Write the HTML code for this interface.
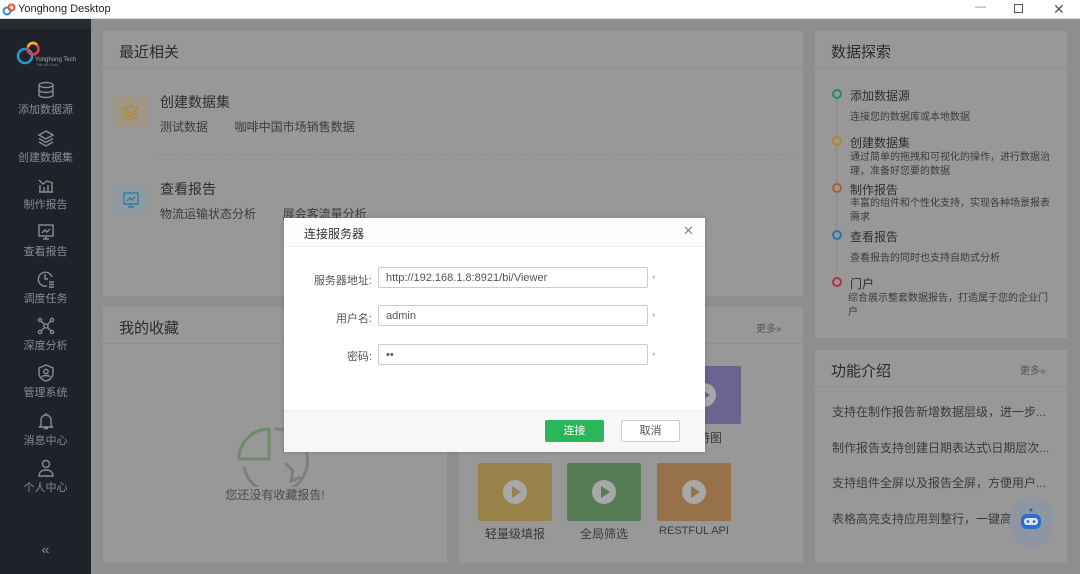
<!DOCTYPE html>
<html><head><meta charset="utf-8"><style>
*{margin:0;padding:0;box-sizing:border-box}
body{width:1080px;height:574px;overflow:hidden;font-family:"Liberation Sans","Noto Sans CJK SC",sans-serif;background:#8e8e8e;position:relative;color:#333}
.abs{position:absolute}
.title{left:0;top:0;width:1080px;height:19px;background:#fff;border-bottom:1px solid #ddd;font-size:11px;color:#222}
.side{left:0;top:19px;width:91px;height:555px;background:#1f2229}
.si{position:absolute;left:0;width:91px;text-align:center;color:#8a8c90;font-size:11px}
.si svg{display:block;margin:0 auto 2px}
.panel{background:#989898}
.ph{height:37px;border-bottom:1px solid #8f8f8f;font-size:15px;color:#2b2b2b;padding:10px 16px}
.t{color:#2e2e2e}
.g{color:#3b3b3b}
.tile{position:absolute;width:74px;height:58px;border-radius:2px}
.tile i{position:absolute;left:25px;top:17px;width:24px;height:24px;border-radius:50%;background:#a8a8a8}
.tile i:after{content:"";position:absolute;left:9px;top:6px;border-left:9px solid currentColor;border-top:6px solid transparent;border-bottom:6px solid transparent}
.lbl{position:absolute;width:90px;margin-left:-8px;text-align:center;font-size:12px;color:#3a3a3a;white-space:nowrap}
.dot{position:absolute;left:17px;width:10px;height:10px;border-radius:50%;border:2px solid}
.inp{position:absolute;left:94px;width:270px;height:21px;border:1px solid #ccc;border-radius:2px;background:#fff;font-size:11px;color:#555;padding:4px 7px}
.lab{position:absolute;right:333px;font-size:11px;color:#555;text-align:right}
.star{position:absolute;left:368px;color:#f08080;font-size:9px}
</style></head><body>
<div class="abs title">
<svg class="abs" style="left:2px;top:3px" width="14" height="13" viewBox="0 0 14 13"><circle cx="5" cy="8" r="3.5" fill="none" stroke="#2a8fd8" stroke-width="2"/><circle cx="9.5" cy="4.5" r="3" fill="none" stroke="#e84a3a" stroke-width="2"/><circle cx="9" cy="3" r="1.2" fill="#f0c020"/></svg>
<span class="abs" style="left:18px;top:3px">Yonghong Desktop</span>
<span class="abs" style="left:975px;top:1px;color:#888">—</span>
<span class="abs" style="left:1014px;top:4px;width:9px;height:9px;border:1px solid #555"></span>
<span class="abs" style="left:1053px;top:1px;color:#555;font-size:14px">✕</span>
</div>
<div class="abs side">
<div class="abs" style="left:0;top:0;width:91px;height:10px;background:#262a32"></div>
<svg class="abs" style="left:14px;top:20px" width="66" height="30" viewBox="0 0 66 30"><circle cx="11" cy="17" r="7" fill="none" stroke="#1c9fd0" stroke-width="2.5"/><circle cx="19" cy="10" r="5.5" fill="none" stroke="#e0404a" stroke-width="2.5"/><path d="M14 8 a5 5 0 0 1 9 -2" stroke="#f0b020" stroke-width="2.5" fill="none"/><text x="21" y="22" font-size="6" fill="#aaa" font-family="Liberation Sans">Yonghong Tech</text><text x="22" y="27" font-size="3.5" fill="#777" font-family="Liberation Sans">Talk with Data</text></svg>
<div class="si" style="top:62px"><svg width="18" height="18" viewBox="0 0 18 18" fill="none" stroke="#8a8c90" stroke-width="1.4"><ellipse cx="9" cy="4" rx="7" ry="2.5"/><path d="M2 4v10c0 1.4 3 2.5 7 2.5s7-1.1 7-2.5V4M2 9c0 1.4 3 2.5 7 2.5s7-1.1 7-2.5"/></svg>添加数据源</div>
<div class="si" style="top:110px"><svg width="18" height="18" viewBox="0 0 18 18" fill="none" stroke="#8a8c90" stroke-width="1.4"><path d="M9 2l7 4-7 4-7-4zM2 9.5l7 4 7-4M2 13l7 4 7-4"/></svg>创建数据集</div>
<div class="si" style="top:157px"><svg width="18" height="18" viewBox="0 0 18 18" fill="none" stroke="#8a8c90" stroke-width="1.4"><path d="M2 16h14M3 9v7M7 11v5M11 9v7M15 7v9M2 4l4 4 4-3 6 2"/></svg>制作报告</div>
<div class="si" style="top:204px"><svg width="18" height="18" viewBox="0 0 18 18" fill="none" stroke="#8a8c90" stroke-width="1.4"><rect x="2" y="2" width="14" height="11"/><path d="M5 10l3-3 2 2 3-3M6 16h6M9 13v3"/></svg>查看报告</div>
<div class="si" style="top:251px"><svg width="18" height="18" viewBox="0 0 18 18" fill="none" stroke="#8a8c90" stroke-width="1.4"><path d="M15 7a7 7 0 1 0-5 9"/><path d="M8 4v5h3M12 12h5M12 14.5h5M12 17h5"/></svg>调度任务</div>
<div class="si" style="top:298px"><svg width="18" height="18" viewBox="0 0 18 18" fill="none" stroke="#8a8c90" stroke-width="1.3"><circle cx="9" cy="9" r="2"/><circle cx="3" cy="3" r="1.6"/><circle cx="15" cy="3" r="1.6"/><circle cx="3" cy="15" r="1.6"/><circle cx="15" cy="15" r="1.6"/><path d="M4 4l3.5 3.5M14 4l-3.5 3.5M4 14l3.5-3.5M14 14l-3.5-3.5"/></svg>深度分析</div>
<div class="si" style="top:345px"><svg width="18" height="18" viewBox="0 0 18 18" fill="none" stroke="#8a8c90" stroke-width="1.4"><path d="M9 1l7 3v5c0 4-3 7-7 8-4-1-7-4-7-8V4z"/><circle cx="9" cy="7.5" r="2.2"/><path d="M5 13c1-2 7-2 8 0"/></svg>管理系统</div>
<div class="si" style="top:393px"><svg width="18" height="18" viewBox="0 0 18 18" fill="none" stroke="#8a8c90" stroke-width="1.4"><path d="M4 13V8a5 5 0 0 1 10 0v5l1.5 2h-13zM7 16.5h4M9 1v2"/></svg>消息中心</div>
<div class="si" style="top:440px"><svg width="18" height="18" viewBox="0 0 18 18" fill="none" stroke="#8a8c90" stroke-width="1.4"><circle cx="9" cy="5" r="3.5"/><path d="M2 17c0-4 3-6 7-6s7 2 7 6z"/></svg>个人中心</div>
<div class="si" style="top:522px;font-size:14px">«</div>
</div>

<div class="abs panel" style="left:103px;top:31px;width:700px;height:265px">
<div class="ph">最近相关</div>
<div class="abs" style="left:11px;top:64px;width:34px;height:34px;border-radius:4px;background:#9f9685"><svg style="margin:8px" width="18" height="18" viewBox="0 0 18 18" fill="none" stroke="#b08a30" stroke-width="1.4"><path d="M9 2l7 4-7 4-7-4zM2 9.5l7 4 7-4M2 13l7 4 7-4"/></svg></div>
<div class="abs t" style="left:57px;top:61px;font-size:14px">创建数据集</div>
<div class="abs g" style="left:57px;top:87px;font-size:12px">测试数据&nbsp;&nbsp;&nbsp;&nbsp;&nbsp;&nbsp;&nbsp;&nbsp;咖啡中国市场销售数据</div>
<div class="abs" style="left:51px;top:123px;width:640px;border-top:1px dashed #8c8c8c"></div>
<div class="abs" style="left:11px;top:152px;width:34px;height:34px;border-radius:4px;background:#8f9aa0"><svg style="margin:8px" width="18" height="18" viewBox="0 0 18 18" fill="none" stroke="#2a7ea8" stroke-width="1.4"><rect x="2" y="2" width="14" height="11"/><path d="M5 10l3-3 2 2 3-3M6 16h6M9 13v3"/></svg></div>
<div class="abs t" style="left:57px;top:148px;font-size:14px">查看报告</div>
<div class="abs g" style="left:57px;top:174px;font-size:12px">物流运输状态分析&nbsp;&nbsp;&nbsp;&nbsp;&nbsp;&nbsp;&nbsp;&nbsp;展会客流量分析</div>
</div>

<div class="abs panel" style="left:103px;top:307px;width:344px;height:256px">
<div class="ph">我的收藏</div>
<svg class="abs" style="left:130px;top:100px" width="95" height="80" viewBox="0 0 95 80"><path d="M6 52a30 30 0 0 1 30-30v30z" fill="none" stroke="#6f8b6c" stroke-width="3"/><path d="M41 22a32 32 0 1 1-30 38" fill="none" stroke="#7e7e7e" stroke-width="3"/><path d="M52 56l8 8-2 10 10-4" stroke="#7e7e7e" stroke-width="3" fill="none"/><text x="50" y="66" font-size="7" fill="#6f8b6c">+ +</text></svg>
<div class="abs" style="left:0;top:179px;width:344px;text-align:center;font-size:12px;color:#4a4a4a">您还没有收藏报告!</div>
</div>

<div class="abs panel" style="left:459px;top:307px;width:344px;height:256px">
<div class="ph" style="height:37px"></div>
<div class="abs" style="left:297px;top:13px;font-size:10px;color:#555">更多»</div>
<div class="tile" style="left:208px;top:59px;background:#6b6390;color:#6b6390"><i></i></div><div class="lbl" style="left:208px;top:122px">甘特图</div>
<div class="tile" style="left:19px;top:156px;background:#98824a;color:#98824a"><i></i></div><div class="lbl" style="left:19px;top:218px">轻量级填报</div>
<div class="tile" style="left:108px;top:156px;background:#567d53;color:#567d53"><i></i></div><div class="lbl" style="left:108px;top:218px">全局筛选</div>
<div class="tile" style="left:198px;top:156px;background:#967149;color:#967149"><i></i></div><div class="lbl" style="left:198px;top:218px;font-size:11px">RESTFUL API</div>
</div>

<div class="abs panel" style="left:815px;top:31px;width:252px;height:307px">
<div class="ph">数据探索</div>
<div class="abs" style="left:21px;top:66px;height:190px;border-left:1px solid #8a8a8a"></div>
<div class="dot" style="top:58px;border-color:#1e8c5e;background:#989898"></div>
<div class="dot" style="top:105px;border-color:#b08a20;background:#989898"></div>
<div class="dot" style="top:152px;border-color:#b06028;background:#989898"></div>
<div class="dot" style="top:199px;border-color:#1e7ab0;background:#989898"></div>
<div class="dot" style="top:246px;border-color:#b03048;background:#989898"></div>
<div class="abs t" style="left:35px;top:56px;font-size:12px">添加数据源</div>
<div class="abs g" style="left:35px;top:80px;font-size:10px;line-height:14px">连接您的数据库或本地数据</div>
<div class="abs t" style="left:35px;top:103px;font-size:12px">创建数据集</div>
<div class="abs g" style="left:35px;top:120px;font-size:10px;line-height:14px;width:200px">通过简单的拖拽和可视化的操作，进行数据治理，准备好您要的数据</div>
<div class="abs t" style="left:35px;top:150px;font-size:12px">制作报告</div>
<div class="abs g" style="left:35px;top:166px;font-size:10px;line-height:14px;width:200px">丰富的组件和个性化支持，实现各种场景报表需求</div>
<div class="abs t" style="left:35px;top:197px;font-size:12px">查看报告</div>
<div class="abs g" style="left:35px;top:221px;font-size:10px;line-height:14px">查看报告的同时也支持自助式分析</div>
<div class="abs t" style="left:35px;top:244px;font-size:12px">门户</div>
<div class="abs g" style="left:33px;top:261px;font-size:10px;line-height:14px;width:205px">综合展示整套数据报告，打造属于您的企业门户</div>
</div>

<div class="abs panel" style="left:815px;top:350px;width:252px;height:213px">
<div class="ph">功能介绍</div>
<div class="abs" style="left:205px;top:12px;font-size:10px;color:#555">更多»</div>
<div class="abs g" style="left:17px;top:53px;font-size:12px">支持在制作报告新增数据层级，进一步...</div>
<div class="abs g" style="left:17px;top:89px;font-size:12px">制作报告支持创建日期表达式\日期层次...</div>
<div class="abs g" style="left:17px;top:124px;font-size:12px">支持组件全屏以及报告全屏，方便用户...</div>
<div class="abs g" style="left:17px;top:160px;font-size:12px">表格高亮支持应用到整行，一键高</div>
<div class="abs" style="left:195px;top:147px;width:44px;height:50px;border-radius:22px;background:#8e96a4"><svg style="margin:11px 9px" width="26" height="26" viewBox="0 0 26 26"><circle cx="12" cy="2" r="1.5" fill="#1e5fb0"/><rect x="2" y="6" width="20" height="15" rx="6" fill="#2a6fc8"/><rect x="5" y="10" width="14" height="7" rx="3" fill="#d8e4f4"/><circle cx="9" cy="13.5" r="1.3" fill="#1e5fb0"/><circle cx="15" cy="13.5" r="1.3" fill="#1e5fb0"/></svg></div>
</div>

<div class="abs" style="left:284px;top:218px;width:421px;height:234px;background:#fff;box-shadow:0 0 4px rgba(0,0,0,.2)">
<div class="abs" style="left:0;top:0;width:421px;height:29px;border-bottom:1px solid #eee;background:#fdfdfd"></div>
<div class="abs" style="left:20px;top:7px;font-size:12px;color:#333">连接服务器</div>
<div class="abs" style="left:399px;top:5px;font-size:13px;color:#888">✕</div>
<div class="lab" style="top:54px">服务器地址:</div><div class="inp" style="top:49px">http://192.168.1.8:8921/bi/Viewer</div><div class="star" style="top:56px">*</div>
<div class="lab" style="top:92px">用户名:</div><div class="inp" style="top:87px">admin</div><div class="star" style="top:94px">*</div>
<div class="lab" style="top:130px">密码:</div><div class="inp" style="top:126px">••</div><div class="star" style="top:133px">*</div>
<div class="abs" style="left:0;top:192px;width:421px;height:42px;background:#f7f7f7;border-top:1px solid #eee"></div>
<div class="abs" style="left:261px;top:202px;width:59px;height:22px;background:#2ab75a;border-radius:2px;color:#fff;font-size:11px;text-align:center;line-height:22px">连接</div>
<div class="abs" style="left:337px;top:202px;width:59px;height:22px;background:#fff;border:1px solid #ccc;border-radius:2px;color:#555;font-size:11px;text-align:center;line-height:20px">取消</div>
</div>
</body></html>
